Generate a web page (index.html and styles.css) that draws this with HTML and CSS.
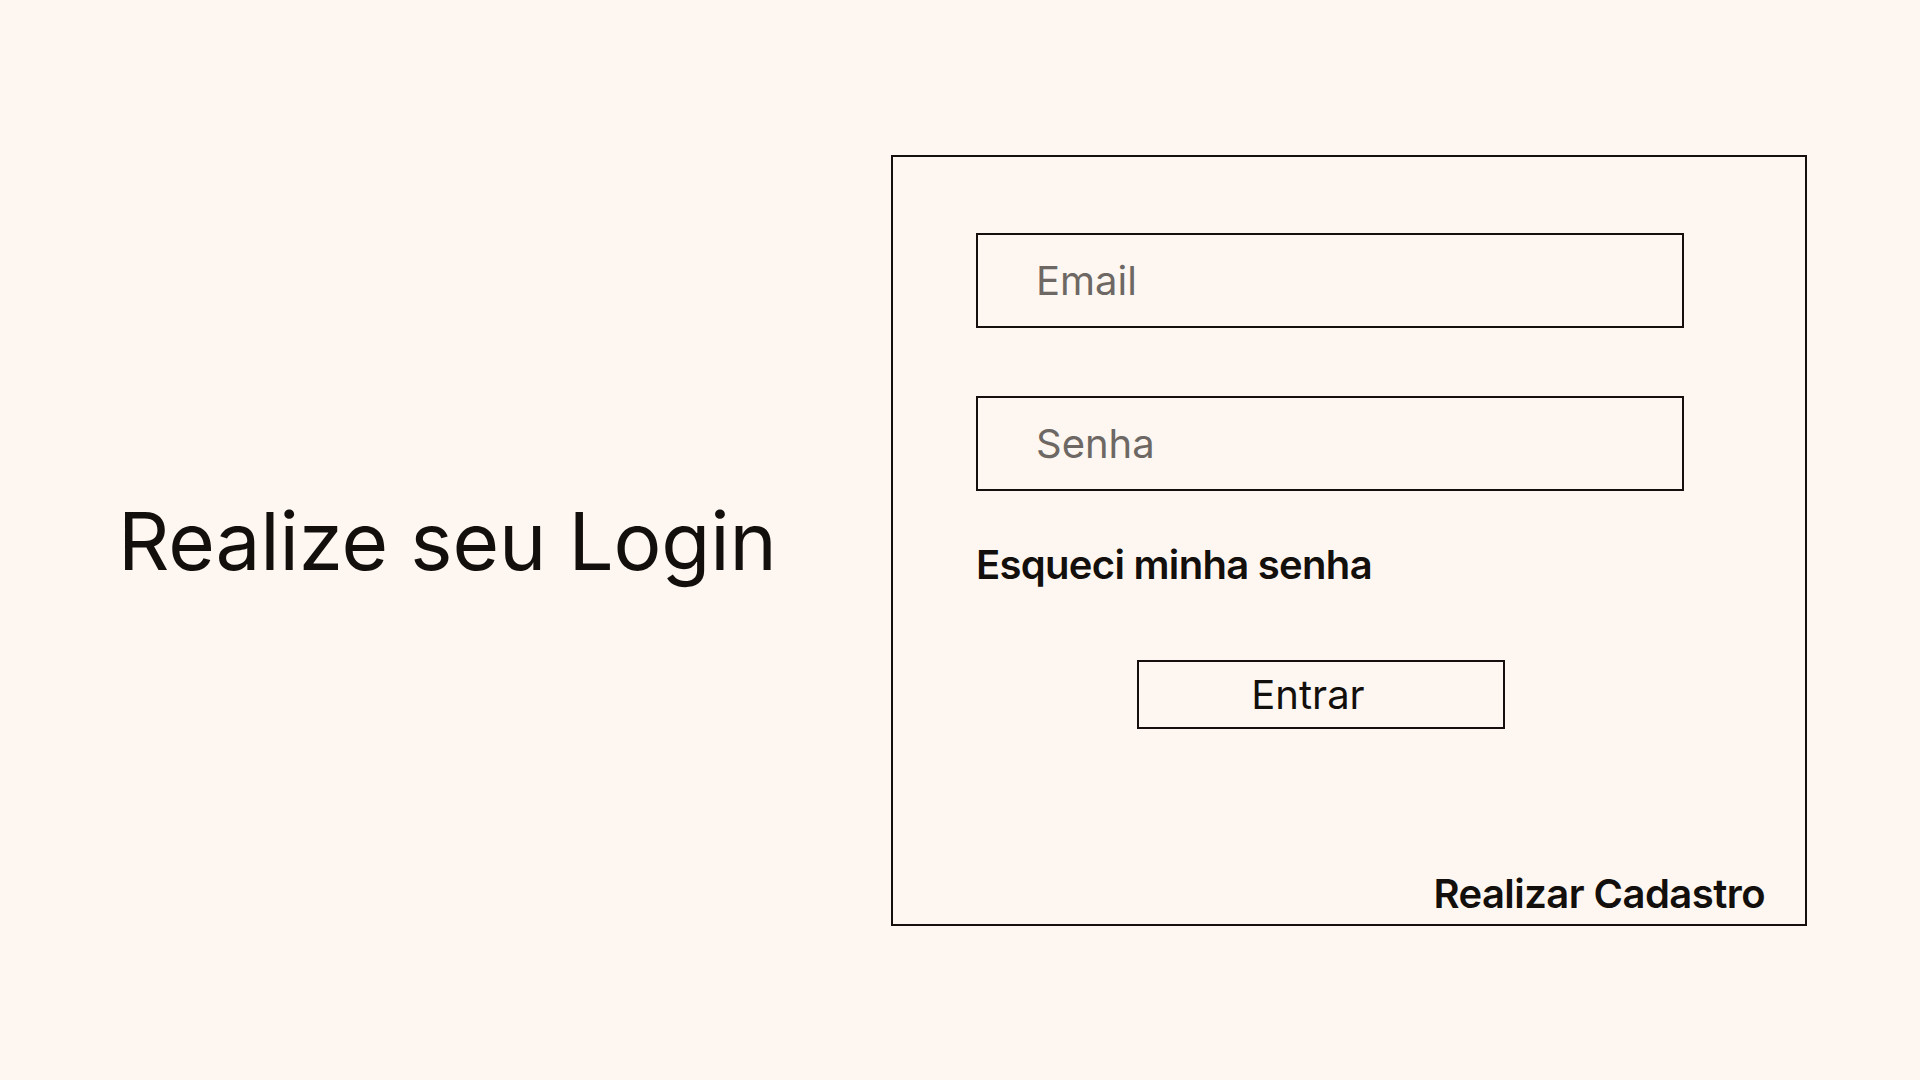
FILE: index.html
```html
<!DOCTYPE html>
<html lang="pt-BR">
<head>
<meta charset="utf-8">
<title>Login</title>
<link rel="stylesheet" href="styles.css">
</head>
<body>
<main class="page">
  <section class="intro">
    <h1 class="title">Realize seu Login</h1>
  </section>
  <form class="card">
    <input class="field" type="email" placeholder="Email">
    <input class="field field-gap" type="password" placeholder="Senha">
    <a class="forgot" href="#">Esqueci minha senha</a>
    <button class="enter" type="button">Entrar</button>
    <a class="signup" href="#">Realizar Cadastro</a>
  </form>
</main>
</body>
</html>
```

FILE: styles.css
```css
* { box-sizing: border-box; }

html, body {
  margin: 0;
  padding: 0;
  background: #fef7f1;
}

body {
  font-family: Inter, "Noto Sans", sans-serif;
  color: #130f0c;
}

.page {
  display: flex;
  align-items: center;
  height: 100vh;
}

.intro {
  width: 891px;
  flex: 0 0 891px;
  padding-left: 118px;
}

.title {
  margin: 0;
  font-size: 80px;
  font-weight: 400;
  line-height: normal;
  letter-spacing: -0.15px;
  color: #130f0c;
}

.card {
  width: 916px;
  height: 771px;
  border: 2px solid #15100d;
  padding: 76px 40px 6px 83px;
  display: flex;
  flex-direction: column;
  align-items: flex-start;
}

.field {
  width: 708px;
  height: 95px;
  border: 2px solid #15100d;
  background: transparent;
  padding: 0 0 0 58px;
  font-family: Inter, "Noto Sans", sans-serif;
  font-size: 40px;
  color: #130f0c;
  outline: none;
  margin: 0;
}

.field::placeholder {
  color: #6e6864;
  opacity: 1;
}

.field-gap {
  margin-top: 68px;
}

.forgot {
  margin-top: 49px;
  font-size: 40px;
  font-weight: 600;
  line-height: normal;
  letter-spacing: -0.7px;
  color: #130f0c;
  text-decoration: none;
}

.enter {
  margin: 71px 0 0 161px;
  width: 368px;
  height: 69px;
  border: 2px solid #15100d;
  background: transparent;
  font-family: Inter, "Noto Sans", sans-serif;
  font-size: 40px;
  font-weight: 400;
  color: #130f0c;
  padding: 0 26px 0 0;
  line-height: normal;
  cursor: pointer;
}

.signup {
  margin-top: auto;
  align-self: flex-end;
  font-size: 40px;
  font-weight: 600;
  line-height: normal;
  letter-spacing: -0.55px;
  color: #130f0c;
  text-decoration: none;
}
```
